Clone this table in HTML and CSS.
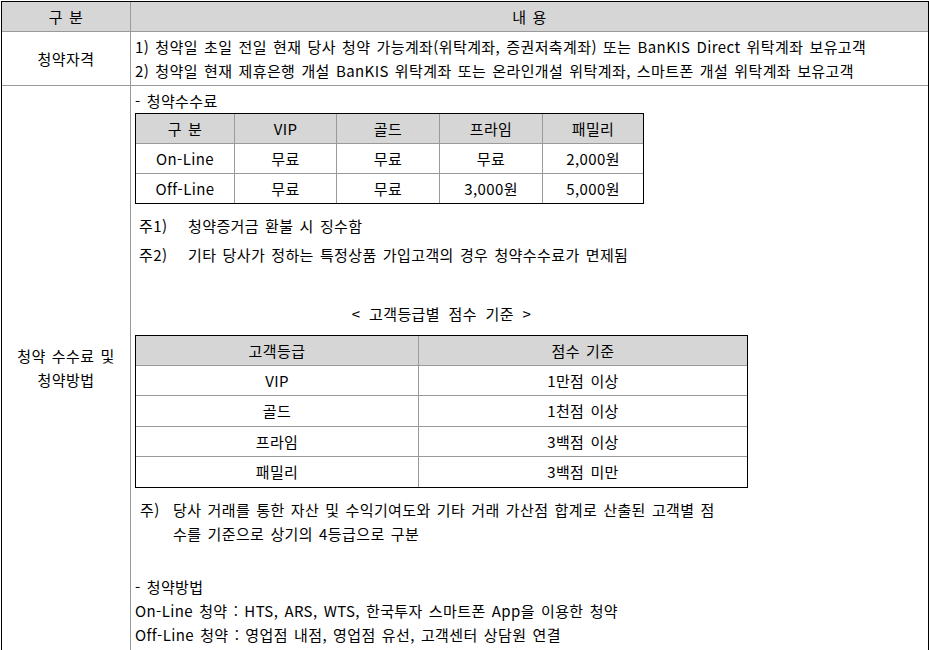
FILE: index.html
```html
<!DOCTYPE html>
<html lang="ko">
<head>
<meta charset="utf-8">
<title>청약 안내</title>
<link rel="stylesheet" href="styles.css">
</head>
<body>
<div class="page">
<table class="main">
  <tr class="head">
    <th class="c1">구 분</th>
    <th class="c2">내 용</th>
  </tr>
  <tr class="qual">
    <td class="label">청약자격</td>
    <td class="content">
      <div class="ln">1) 청약일 초일 전일 현재 당사 청약 가능계좌(위탁계좌, 증권저축계좌) 또는 BanKIS Direct 위탁계좌 보유고객</div>
      <div class="ln">2) 청약일 현재 제휴은행 개설 BanKIS 위탁계좌 또는 온라인개설 위탁계좌, 스마트폰 개설 위탁계좌 보유고객</div>
    </td>
  </tr>
  <tr class="fee">
    <td class="label">청약 수수료 및<br>청약방법</td>
    <td class="content body">
      <div class="ln">- 청약수수료</div>
      <table class="grid fee-table">
        <tr class="gh"><th class="f1">구 분</th><th class="f2">VIP</th><th class="f3">골드</th><th class="f4">프라임</th><th class="f5">패밀리</th></tr>
        <tr class="gr"><td>On-Line</td><td>무료</td><td>무료</td><td>무료</td><td>2,000원</td></tr>
        <tr class="gr"><td>Off-Line</td><td>무료</td><td>무료</td><td>3,000원</td><td>5,000원</td></tr>
      </table>
      <div class="note n1"><span class="tag">주1)</span><span>청약증거금 환불 시 징수함</span></div>
      <div class="note n2"><span class="tag">주2)</span><span>기타 당사가 정하는 특정상품 가입고객의 경우 청약수수료가 면제됨</span></div>
      <div class="caption">&lt; 고객등급별 점수 기준 &gt;</div>
      <table class="grid grade-table">
        <tr class="gh"><th class="g1">고객등급</th><th class="g2">점수 기준</th></tr>
        <tr class="gr r1"><td>VIP</td><td>1만점 이상</td></tr>
        <tr class="gr r2"><td>골드</td><td>1천점 이상</td></tr>
        <tr class="gr r1"><td>프라임</td><td>3백점 이상</td></tr>
        <tr class="gr r2"><td>패밀리</td><td>3백점 미만</td></tr>
      </table>
      <div class="foot"><span class="ftag">주)</span><span class="ftext">당사 거래를 통한 자산 및 수익기여도와 기타 거래 가산점 합계로 산출된 고객별 점<br>수를 기준으로 상기의 4등급으로 구분</span></div>
      <div class="method">
        <div class="ln">- 청약방법</div>
        <div class="ln">On-Line 청약 : HTS, ARS, WTS, 한국투자 스마트폰 App을 이용한 청약</div>
        <div class="ln">Off-Line 청약 : 영업점 내점, 영업점 유선, 고객센터 상담원 연결</div>
      </div>
    </td>
  </tr>
</table>
</div>
</body>
</html>
```

FILE: styles.css
```css
* { box-sizing: border-box; }

body {
  margin: 0;
  font-family: "Noto Sans CJK KR", "Noto Sans", sans-serif;
  font-size: 15px;
  letter-spacing: 0.4px;
  word-spacing: 1.5px;
  color: #000;
  background: #fff;
}

.page {
  padding: 1px 0 0 1px;
}

table {
  border-collapse: separate;
  border-spacing: 0;
  table-layout: fixed;
}

th, td {
  padding: 0;
  font-weight: normal;
  text-align: center;
  vertical-align: middle;
}

.main {
  width: 928px;
  border: 1px solid #000;
  border-bottom: none;
}

.main > tbody > tr > th,
.main > tbody > tr > td {
  border-top: 1px solid #9a9a9a;
}

.main > tbody > tr > .c2,
.main > tbody > tr > .content {
  border-left: 1px solid #9a9a9a;
}

.main > tbody > tr.head > th {
  border-top: none;
  height: 29px;
  background: #d6d6d6;
  line-height: 20px;
}

.main .c1 { width: 128px; }

.label {
  line-height: 24px;
}

.qual > td {
  height: 54px;
}

.content {
  text-align: left;
  padding-left: 4px;
}

.ln {
  line-height: 24px;
  white-space: nowrap;
}

.body {
  padding-top: 3px;
  padding-bottom: 3px;
  vertical-align: top;
}

/* inner grids */
.grid {
  border: 1px solid #000;
  line-height: 20px;
}

.grid td, .grid th {
  border-left: 1px solid #9a9a9a;
  border-top: 1px solid #9a9a9a;
}

.grid tr > :first-child {
  border-left: none;
}

.grid tr.gh > th {
  border-top: none;
  background: #d6d6d6;
  height: 29px;
}

.grid tr.gr > td {
  height: 30px;
}

.fee-table { width: 509px; }
.fee-table .f1 { width: 98px; }
.fee-table .f2 { width: 102px; }
.fee-table .f3 { width: 103px; }
.fee-table .f4 { width: 103px; }
.fee-table .f5 { width: 101px; }

.note {
  display: flex;
  line-height: 24px;
  padding-left: 4px;
  white-space: nowrap;
}

.n1 { margin-top: 10px; }
.n2 { margin-top: 5px; }

.tag {
  width: 49px;
  flex: none;
}

.caption {
  width: 613px;
  text-align: center;
  line-height: 24px;
  margin-top: 35px;
  word-spacing: 4px;
}

.grade-table {
  width: 613px;
  margin-top: 9px;
}

.grade-table .g1 { width: 282px; }

.grade-table tr.r1 > td { height: 30px; }
.grade-table tr.r2 > td { height: 31px; }

.foot {
  display: flex;
  margin-top: 10px;
  line-height: 24px;
  padding-left: 5px;
  white-space: nowrap;
}

.ftag {
  width: 33px;
  flex: none;
}

.method {
  margin-top: 29px;
}
```
